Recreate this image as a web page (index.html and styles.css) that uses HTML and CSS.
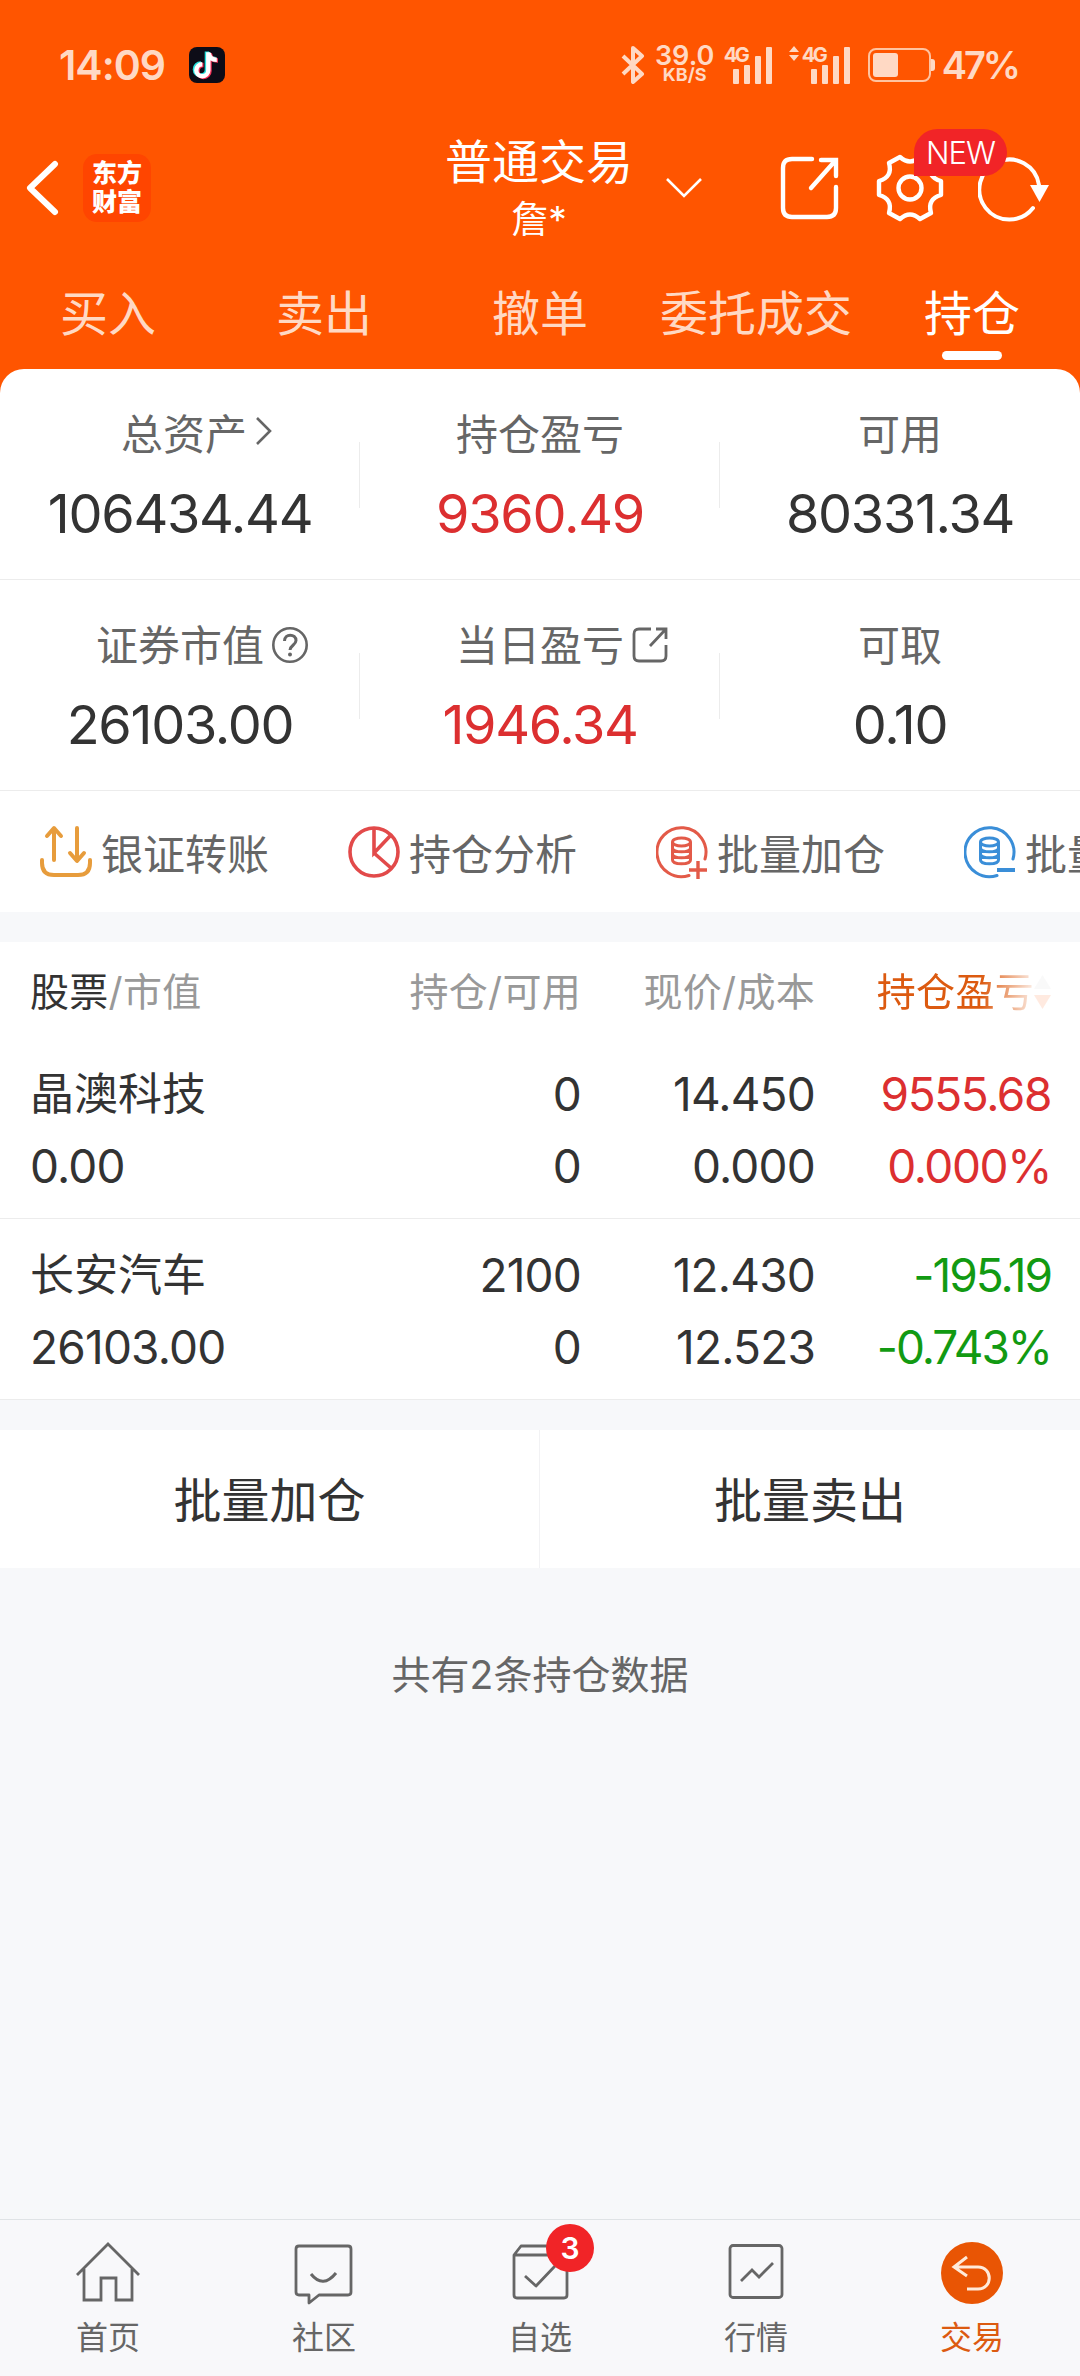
FILE: index.html
```html
<!DOCTYPE html>
<html lang="zh-CN">
<head>
  <meta charset="UTF-8">
  <meta name="viewport" content="width=device-width, initial-scale=1.0">
  <title>普通交易</title>
  <link rel="stylesheet" href="styles.css">
</head>
<body>
  <header class="header">
    <div class="status">
      <span class="time">14:09</span>
      <svg class="tiktok" width="36" height="36" viewBox="0 0 36 36" fill="none">
        <rect width="36" height="36" rx="8" fill="#0d0c17"/>
        <g stroke-width="4.4">
          <path d="M18.500 5v18a6 6 0 1 1-6-6M19 6c.5 4 3 6.500 8 6.500" stroke="#25e0dc" transform="translate(-.6 -.6)"/>
          <path d="M18.500 5v18a6 6 0 1 1-6-6M19 6c.5 4 3 6.500 8 6.500" stroke="#f8325a" transform="translate(2 1)"/>
          <path d="M18.500 5v18a6 6 0 1 1-6-6M19 6c.5 4 3 6.500 8 6.500" stroke="#fff" transform="translate(.8 .3)"/>
        </g>
      </svg>
      <div class="status-right">
        <svg class="bluetooth" width="24" height="38" viewBox="0 0 24 38" fill="none" stroke="#ffd9c4" stroke-width="4" stroke-linejoin="round">
          <path d="M2 10l19 18-9 8V2l9 8L2 28"/>
        </svg>
        <div class="speed"><b>39.0</b><span>KB/S</span></div>
        <div class="signal">
          <span>4G</span>
          <svg width="40" height="37" viewBox="0 0 40 37" fill="#ffd9c4">
            <rect x="0" y="22" width="6" height="15" rx="1"/><rect x="11" y="18" width="6" height="19" rx="1"/>
            <rect x="22" y="9" width="6" height="28" rx="1"/><rect x="33" y="0" width="6" height="37" rx="1"/>
          </svg>
        </div>
        <svg class="updown" width="10" height="16" viewBox="0 0 10 16" fill="#ffd9c4"><path d="M5 0l5 6H0zM0 9h10l-5 6z"/></svg>
        <div class="signal">
          <span>4G</span>
          <svg width="40" height="37" viewBox="0 0 40 37" fill="#ffd9c4">
            <rect x="0" y="22" width="6" height="15" rx="1"/><rect x="11" y="18" width="6" height="19" rx="1"/>
            <rect x="22" y="9" width="6" height="28" rx="1"/><rect x="33" y="0" width="6" height="37" rx="1"/>
          </svg>
        </div>
        <svg class="battery" width="68" height="34" viewBox="0 0 68 34">
          <rect x="1" y="1" width="61" height="32" rx="7" fill="none" stroke="#ffc3a0" stroke-width="2"/>
          <rect x="5" y="5" width="25" height="24" rx="3" fill="#ffd9c4"/>
          <path d="M63 11h1q3 0 3 3v6q0 3-3 3h-1z" fill="#ffd9c4"/>
        </svg>
        <span class="percent">47%</span>
      </div>
    </div>

    <div class="navbar">
      <svg class="back" width="34" height="56" viewBox="0 0 34 56" fill="none" stroke="#fff" stroke-width="6" stroke-linecap="round" stroke-linejoin="round">
        <path d="M29 4L4 28l25 24"/>
      </svg>
      <div class="logo">东方<br>财富</div>
      <div class="title">
        <h1>普通交易</h1>
        <p>詹*</p>
      </div>
      <svg class="caret" width="38" height="22" viewBox="0 0 38 22" fill="none" stroke="#fff" stroke-width="2.600"><path d="M2 2l17 17L36 2"/></svg>
      <svg class="share" width="60" height="66" viewBox="0 0 60 66" fill="none" stroke="#fff" stroke-width="4.400" stroke-linecap="round">
        <path d="M32 4H12Q3 4 3 13v40q0 9 9 9h35q9 0 9-9V32"/>
        <path d="M31 33L55 6M41 5h15v16"/>
      </svg>
      <div class="settings">
        <svg width="68" height="68" viewBox="0 0 68 68" fill="none" stroke="#fff" stroke-width="4.400" stroke-linejoin="round">
          <path d="M24 3q10 9 20 0l11 6q-4 14 10 18v14q-14 4-10 18l-11 6q-10-9-20 0l-11-6q4-14-10-18V27q14-4 10-18z"/>
          <circle cx="34" cy="34" r="11.500"/>
        </svg>
        <span class="new">NEW</span>
      </div>
      <svg class="refresh" width="72" height="68" viewBox="0 0 72 68" fill="none" stroke="#fff" stroke-width="4" stroke-linecap="round">
        <path d="M55 54A30 30 0 1 1 61 31"/>
        <path d="M52 31h19L61.500 48z" fill="#fff" stroke="none"/>
      </svg>
    </div>

    <nav class="tabs">
      <a>买入</a>
      <a>卖出</a>
      <a>撤单</a>
      <a>委托成交</a>
      <a class="active">持仓</a>
    </nav>
  </header>

  <section class="panel">
    <div class="stats">
      <div class="stat">
        <div class="label total">总资产<svg class="arrow" width="18" height="30" viewBox="0 0 18 30" fill="none" stroke="#666" stroke-width="2.600"><path d="M2 2l13 13L2 28"/></svg></div>
        <div class="value">106434.44</div>
      </div>
      <div class="stat">
        <div class="label">持仓盈亏</div>
        <div class="value red">9360.49</div>
      </div>
      <div class="stat">
        <div class="label">可用</div>
        <div class="value">80331.34</div>
      </div>
    </div>
    <div class="stats">
      <div class="stat">
        <div class="label">证券市值<svg class="hint" width="36" height="36" viewBox="0 0 36 36" fill="none" stroke="#666" stroke-width="2.600">
          <circle cx="18" cy="18" r="16.700"/><path d="M12.500 14c0-8 11.500-7.500 11.500-.500 0 4.500-6 5-6 9.500" stroke-width="3"/><circle cx="18" cy="27.500" r="2" fill="#666" stroke="none"/></svg></div>
        <div class="value">26103.00</div>
      </div>
      <div class="stat">
        <div class="label">当日盈亏<svg class="hint" width="36" height="36" viewBox="0 0 36 36" fill="none" stroke="#666" stroke-width="2.800">
          <path d="M19 2H7Q2 2 2 7v22q0 5 5 5h22q5 0 5-5V18M18 19L33 3M24 2h10v10"/></svg></div>
        <div class="value red">1946.34</div>
      </div>
      <div class="stat">
        <div class="label">可取</div>
        <div class="value">0.10</div>
      </div>
    </div>

    <div class="tools">
      <div class="tool">
        <svg width="52" height="54" viewBox="0 0 52 54" fill="none" stroke="#e79c3c" stroke-width="4" stroke-linecap="round" stroke-linejoin="round">
          <path d="M2 35v3q0 12 12 12h24q12 0 12-12v-3M14 35V4M7 11l7-8 7 8M37 3v32M30 28l7 8 7-8"/>
        </svg>银证转账
      </div>
      <div class="tool">
        <svg width="52" height="54" viewBox="0 0 52 54" fill="none" stroke="#e24a4a" stroke-width="3.600">
          <circle cx="26" cy="27" r="24"/><path d="M26 3v25l17-18M26 28l17 15"/>
        </svg>持仓分析
      </div>
      <div class="tool">
        <svg width="52" height="54" viewBox="0 0 52 54" fill="none" stroke="#e35a48" stroke-width="3">
          <path d="M33 50.500A24.500 24.500 0 1 1 49 34" stroke-linecap="round"/>
          <ellipse cx="25.500" cy="17" rx="9" ry="4"/><path d="M16.500 17v18c0 5 18 5 18 0V17M16.500 23c0 5 18 5 18 0M16.500 29c0 5 18 5 18 0"/>
          <path d="M33 45h18M42 36v18" stroke-width="3.400"/>
        </svg>批量加仓
      </div>
      <div class="tool">
        <svg width="52" height="54" viewBox="0 0 52 54" fill="none" stroke="#3a8ed8" stroke-width="3">
          <path d="M33 50.500A24.500 24.500 0 1 1 49 34" stroke-linecap="round"/>
          <ellipse cx="25.500" cy="17" rx="9" ry="4"/><path d="M16.500 17v18c0 5 18 5 18 0V17M16.500 23c0 5 18 5 18 0M16.500 29c0 5 18 5 18 0"/>
          <path d="M33 45h18" stroke-width="4"/>
        </svg>批量卖出
      </div>
    </div>
  </section>

  <section class="holdings">
    <div class="row head">
      <span><b>股票</b>/市值</span>
      <span>持仓/可用</span>
      <span>现价/成本</span>
      <span class="sort">持仓盈亏<svg width="17" height="36" viewBox="0 0 17 36"><path d="M8.500 1L17 15H0z" fill="#ccc"/><path d="M0 21h17L8.500 35z" fill="#ff5500"/></svg></span>
    </div>
    <div class="row">
      <span class="name">晶澳科技</span><span>0</span><span>14.450</span><span class="red">9555.68</span>
      <span>0.00</span><span>0</span><span>0.000</span><span class="red">0.000%</span>
    </div>
    <div class="row">
      <span class="name">长安汽车</span><span>2100</span><span>12.430</span><span class="green">-195.19</span>
      <span>26103.00</span><span>0</span><span>12.523</span><span class="green">-0.743%</span>
    </div>
  </section>

  <div class="actions">
    <a>批量加仓</a>
    <a>批量卖出</a>
  </div>

  <p class="summary">共有2条持仓数据</p>

  <footer class="tabbar">
    <a>
      <svg width="66" height="66" viewBox="0 0 66 66" fill="none" stroke="#666" stroke-width="2.800">
        <path d="M2 35L33 4l31 31M9 29v31h17V38h15v22h16V29"/>
      </svg>首页
    </a>
    <a>
      <svg width="66" height="66" viewBox="0 0 66 66" fill="none" stroke="#666" stroke-width="2.800" stroke-linejoin="round">
        <path d="M8 6h49q3 0 3 3v43q0 3-3 3H28l-10 8v-8H8q-3 0-3-3V9q0-3 3-3z"/><path d="M20 34q12 15 25-1" stroke-width="3"/>
      </svg>社区
    </a>
    <a>
      <svg width="66" height="66" viewBox="0 0 66 66" fill="none" stroke="#666" stroke-width="2.800" stroke-linejoin="round">
        <path d="M7 15l7-9h39l7 9v40q0 3-3 3H10q-3 0-3-3zM7 15h53"/><path d="M18 36l11 10 19-20"/>
      </svg>
      <i class="count">3</i>自选
    </a>
    <a>
      <svg width="66" height="66" viewBox="0 0 66 66" fill="none" stroke="#666" stroke-width="2.800">
        <rect x="7" y="5.500" width="52" height="52" rx="3"/><path d="M18 41l11-11 7 7 14-14"/>
      </svg>行情
    </a>
    <a class="active">
      <svg width="66" height="66" viewBox="0 0 66 66" fill="none" stroke="#ffead9" stroke-width="3">
        <circle cx="33" cy="33" r="31" fill="#e95504" stroke="none"/>
        <path d="M28 17L15 27l13 9M16 27h23c15 0 15 22 0 22H28"/>
      </svg>交易
    </a>
  </footer>
</body>
</html>
```

FILE: styles.css
```css
* {
  box-sizing: border-box;
}

body {
  margin: 0;
  height: 2376px;
  display: flex;
  flex-direction: column;
  background: #f7f8fa;
  color: #333;
  font-family: Inter, "Noto Sans CJK SC", sans-serif;
  overflow: hidden;
}

svg {
  flex-shrink: 0;
  display: block;
}

h1, p {
  margin: 0;
  font-weight: inherit;
}

.header {
  height: 393px;
  background: #ff5500;
  color: #fff;
  flex-shrink: 0;
}

/* status bar */
.status {
  height: 130px;
  padding: 0 62px 0 59px;
  display: flex;
  align-items: center;
  color: #ffd9c4;
}

.time {
  width: 130px;
  font-size: 41px;
  font-weight: 600;
  letter-spacing: -1px;
}

.status-right {
  margin-left: auto;
  display: flex;
  align-items: center;
}

.speed {
  width: 60px;
  margin: 0 9px 0 10px;
  display: flex;
  flex-direction: column;
  align-items: center;
  font-size: 18px;
  font-weight: 700;
  line-height: 18px;
}

.speed b {
  font-size: 27px;
  line-height: 20px;
  font-weight: 600;
}

.signal {
  position: relative;
  padding-left: 9px;
}

.signal span {
  position: absolute;
  top: -2px;
  left: 0;
  font-size: 20px;
  line-height: 20px;
  font-weight: 700;
  letter-spacing: -2.500px;
}

.updown {
  margin: -22px 3px 0 16px;
}

.battery {
  margin: 0 6px 0 17px;
}

.percent {
  font-size: 38px;
  font-weight: 600;
  letter-spacing: -3px;
}

/* title bar */
.navbar {
  height: 115px;
  padding-left: 26px;
  display: flex;
  align-items: center;
}

.logo {
  width: 68px;
  height: 68px;
  margin-left: 23px;
  padding-top: 5px;
  border-radius: 14px;
  background: #ff4500;
  font-size: 25px;
  line-height: 29px;
  font-weight: 900;
  text-align: center;
}

.title {
  width: 200px;
  margin-left: 288px;
  padding-top: 5px;
  text-align: center;
}

.title h1 {
  font-size: 47px;
  line-height: 60px;
}

.title p {
  font-size: 37px;
  line-height: 56px;
}

.caret {
  margin-left: 26px;
}

.share {
  margin-left: 77px;
}

.settings {
  position: relative;
  margin-left: 36px;
}

.new {
  position: absolute;
  z-index: 1;
  left: 38px;
  top: -25px;
  width: 93px;
  height: 47px;
  border-radius: 24px 24px 24px 0;
  background: #f12427;
  font-size: 31px;
  font-weight: 350;
  line-height: 48px;
  letter-spacing: -1px;
  text-align: center;
}

.refresh {
  margin-left: 34px;
}

.tabs {
  height: 123px;
  display: flex;
}

.tabs a {
  position: relative;
  width: 216px;
  padding-top: 34px;
  font-size: 48px;
  line-height: 70px;
  text-align: center;
  white-space: nowrap;
  color: #ffd9c4;
}

.tabs .active {
  color: #fff;
}

.tabs .active::after {
  content: "";
  position: absolute;
  left: 78px;
  top: 106px;
  width: 60px;
  height: 9px;
  border-radius: 5px;
  background: #fff;
}

/* account overview */
.panel {
  margin-top: -24px;
  border-radius: 24px 24px 0 0;
  background: #fff;
  flex-shrink: 0;
  overflow: hidden;
}

.stats {
  height: 211px;
  display: flex;
  border-bottom: 1px solid #ececec;
}

.stat {
  width: 360px;
  padding-top: 36px;
  text-align: center;
  background: linear-gradient(#ececec, #ececec) no-repeat 359px 73px / 1px 66px;
}

.stat:last-child {
  background: none;
}

.label {
  position: relative;
  display: inline-block;
  font-size: 42px;
  line-height: 60px;
  color: #666;
}

.total {
  left: 4px;
}

.hint, .arrow {
  position: absolute;
  left: 100%;
  top: 11px;
  margin-left: 8px;
}

.value {
  margin-top: 17px;
  font-size: 54px;
  line-height: 64px;
  letter-spacing: -1.300px;
}

.red {
  color: #dc2f30;
}

.green {
  color: #129a12;
}

.tools {
  height: 121px;
  padding-left: 40px;
  display: flex;
}

.tool {
  width: 308px;
  flex-shrink: 0;
  display: flex;
  align-items: center;
  gap: 9px;
  font-size: 42px;
  color: #666;
  white-space: nowrap;
}

/* holdings table */
.holdings {
  margin-top: 30px;
  background: #fff;
  flex-shrink: 0;
}

.row {
  height: 181px;
  padding: 20px 29px 0 30px;
  display: grid;
  grid-template-columns: 300px 251px 234px 236px;
  grid-auto-rows: 72px;
  line-height: 72px;
  font-size: 46px;
  letter-spacing: -0.800px;
  text-align: right;
  border-bottom: 1px solid #ececec;
}

.row span:nth-child(4n + 1) {
  text-align: left;
}

.row .red {
  letter-spacing: -1.400px;
}

.row .green {
  letter-spacing: -2px;
}

.row .name {
  font-size: 44px;
  letter-spacing: 0;
}

.head {
  height: 96px;
  padding-top: 14px;
  border: 0;
  font-size: 39px;
  letter-spacing: 0.300px;
  color: #999;
}

.head b {
  font-weight: inherit;
  color: #333;
}

.sort {
  display: flex;
  align-items: center;
  justify-content: flex-end;
  color: #dc5a10;
  -webkit-mask-image: linear-gradient(to right, #000 166px, rgba(0, 0, 0, 0.12) 218px);
  mask-image: linear-gradient(to right, #000 166px, rgba(0, 0, 0, 0.12) 218px);
}

.actions {
  height: 138px;
  margin-top: 30px;
  display: flex;
  background: #fff;
  flex-shrink: 0;
}

.actions a {
  width: 540px;
  font-size: 48px;
  line-height: 141px;
  text-align: center;
}

.actions a:first-child {
  border-right: 1px solid #f2f2f4;
}

.summary {
  margin-top: 77px;
  font-size: 39px;
  line-height: 60px;
  text-align: center;
  color: #666;
}

/* bottom navigation */
.tabbar {
  height: 157px;
  margin-top: auto;
  display: flex;
  border-top: 1px solid #e0e3e6;
  background: #f8f8fa;
  flex-shrink: 0;
}

.tabbar a {
  position: relative;
  width: 216px;
  padding-top: 20px;
  display: flex;
  flex-direction: column;
  align-items: center;
  font-size: 32px;
  line-height: 63px;
  color: #666;
}

.tabbar .active {
  color: #dc5a10;
}

.count {
  position: absolute;
  left: 114px;
  top: 4px;
  width: 48px;
  height: 48px;
  border-radius: 50%;
  background: #f12427;
  color: #fff;
  font-size: 30px;
  font-style: normal;
  font-weight: 600;
  line-height: 48px;
  text-align: center;
}
```
